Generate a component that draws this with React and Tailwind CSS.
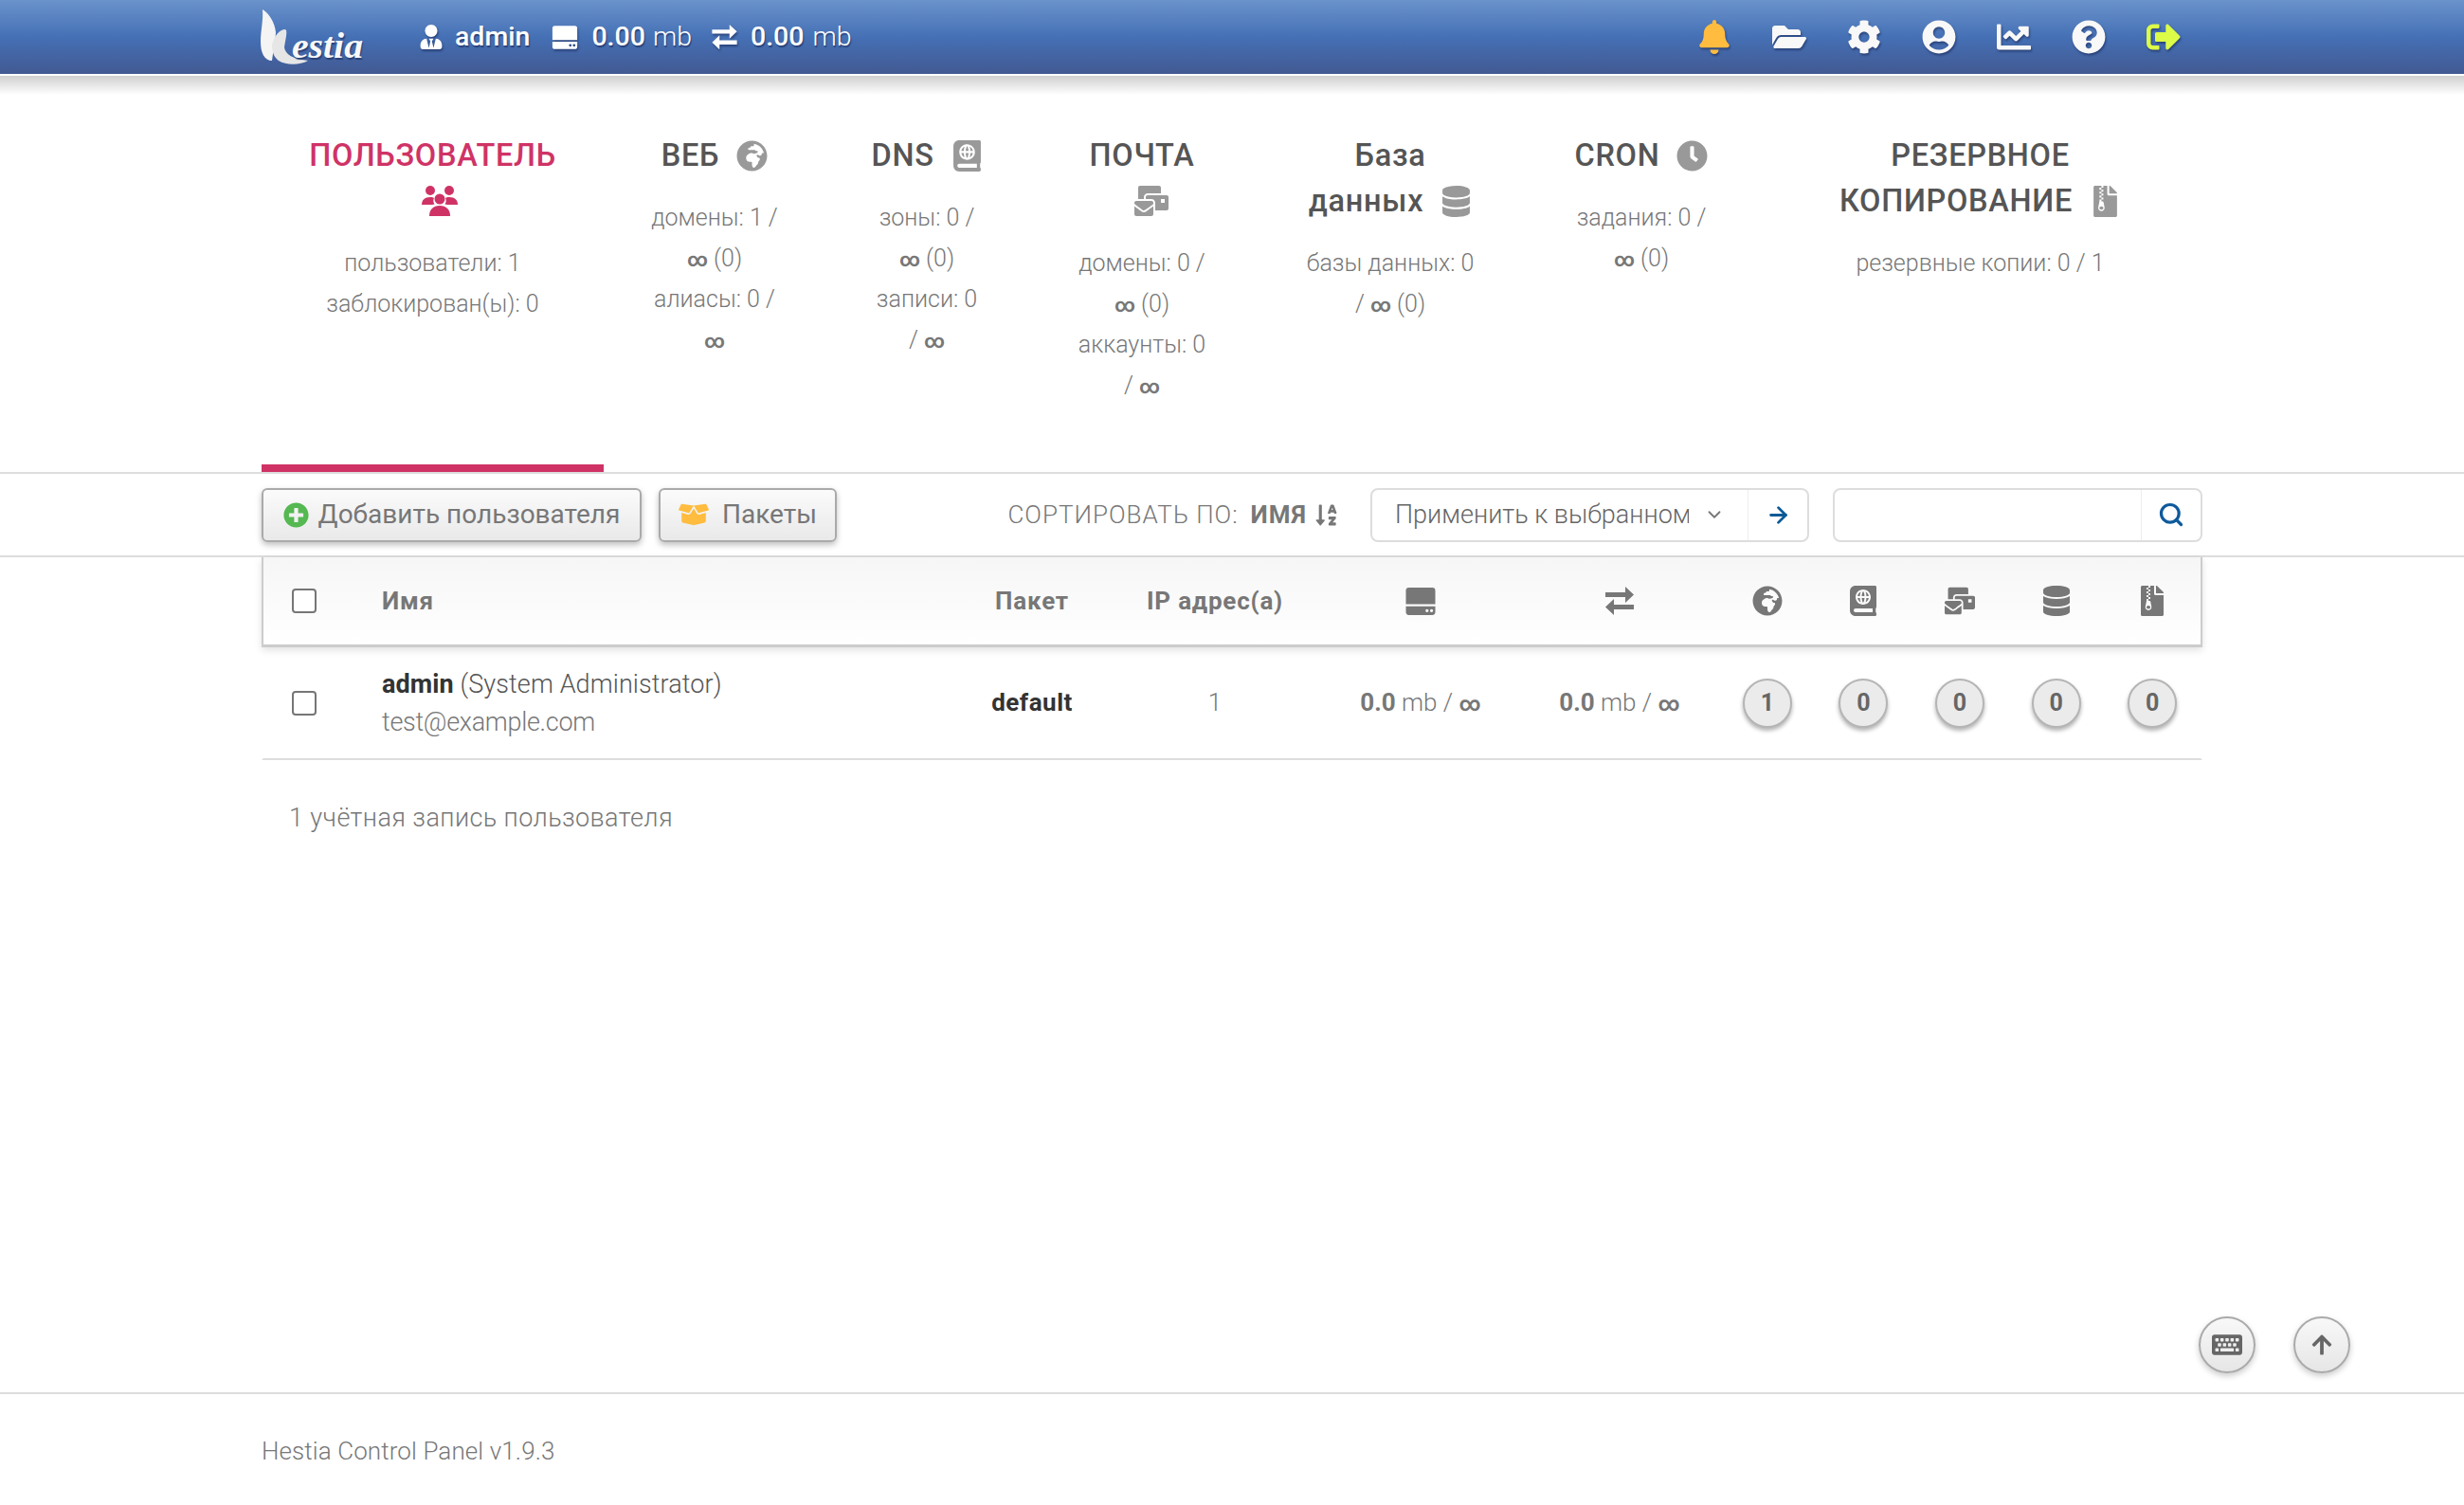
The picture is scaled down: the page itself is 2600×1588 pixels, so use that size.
import {
  FaUserTie, FaBell, FaFolderOpen, FaCog, FaUserCircle, FaChartLine,
  FaQuestionCircle, FaSignOutAlt, FaGlobeAfrica, FaAtlas, FaMailBulk, FaDatabase,
  FaClock, FaFileArchive, FaPlusCircle, FaBoxOpen, FaSortAlphaDown,
  FaKeyboard, FaArrowUp,
} from 'react-icons/fa';
import { ArrowRight, ChevronDown, Search } from 'lucide-react';

const headerShadow = 'drop-shadow-[1px_2px_1px_rgba(30,50,100,0.7)]';

function HddIcon({ className }) {
  return (
    <svg viewBox="0 0 32 30" fill="currentColor" fillRule="evenodd" className={className}>
      <path d="M4 1h24a3 3 0 0 1 3 3v14H1V4a3 3 0 0 1 3-3z" />
      <path d="M1 20h30v6a3 3 0 0 1-3 3H4a3 3 0 0 1-3-3zM21 24.5a1.6 1.6 0 1 0 3.2 0a1.6 1.6 0 1 0-3.2 0zM25.6 24.5a1.6 1.6 0 1 0 3.2 0a1.6 1.6 0 1 0-3.2 0z" />
    </svg>
  );
}

function ExchangeIcon({ className }) {
  return (
    <svg viewBox="0 0 32 32" fill="currentColor" className={className}>
      <path d="M1 7h21V1l9 8.500-9 8.500v-6H1z" />
      <path d="M31 20H10v-6l-9 8.500 9 8.500v-6h21z" />
    </svg>
  );
}

function UsersIcon({ className }) {
  return (
    <svg viewBox="0 0 40 32" fill="currentColor" className={className}>
      <circle cx="10" cy="5" r="5" />
      <circle cx="30" cy="5" r="5" />
      <path d="M1 20c0-5 3-8 9-8 2 0 3 .4 4 1-1 2-1 4 .5 6.500L12 20z" />
      <path d="M39 20c0-5-3-8-9-8-2 0-3 .4-4 1 1 2 1 4-.5 6.500L28 20z" />
      <circle cx="20" cy="14" r="5.500" />
      <path d="M9 32c0-7 4-11 11-11s11 4 11 11z" />
    </svg>
  );
}

const topIcons = [
  { icon: FaBell, color: 'text-[#ffbc3f]' },
  { icon: FaFolderOpen, color: 'text-[#f8f8f8]' },
  { icon: FaCog, color: 'text-[#f8f8f8]' },
  { icon: FaUserCircle, color: 'text-[#f8f8f8]' },
  { icon: FaChartLine, color: 'text-[#f8f8f8]' },
  { icon: FaQuestionCircle, color: 'text-[#f8f8f8]' },
  { icon: FaSignOutAlt, color: 'text-[#dcfc48]' },
];

const tabs = [
  { width: 'w-[361px]', title: ['ПОЛЬЗОВАТЕЛЬ'], icon: UsersIcon, iconClass: 'w-[40px] h-[32px] ml-[14px]', iconBelow: true, active: true, stats: ['пользователи: 1', 'заблокирован(ы): 0'] },
  { width: 'w-[234px]', title: ['ВЕБ'], icon: FaGlobeAfrica, iconClass: 'text-[33px]', stats: ['домены: 1 /', '∞ (0)', 'алиасы: 0 /', '∞'] },
  { width: 'w-[214px]', title: ['DNS'], icon: FaAtlas, iconClass: 'text-[33px]', stats: ['зоны: 0 /', '∞ (0)', 'записи: 0', '/ ∞'] },
  { width: 'w-[240px]', title: ['ПОЧТА'], icon: FaMailBulk, iconClass: 'text-[36px] ml-[19px]', iconBelow: true, stats: ['домены: 0 /', '∞ (0)', 'аккаунты: 0', '/ ∞'] },
  { width: 'w-[284px]', title: ['База', 'данных'], icon: FaDatabase, iconClass: 'text-[33px]', stats: ['базы данных: 0', '/ ∞ (0)'] },
  { width: 'w-[246px]', title: ['CRON'], icon: FaClock, iconClass: 'text-[33px]', stats: ['задания: 0 /', '∞ (0)'] },
  { width: 'w-[469px]', title: ['РЕЗЕРВНОЕ', 'КОПИРОВАНИЕ'], icon: FaFileArchive, iconClass: 'text-[33px]', stats: ['резервные копии: 0 / 1'] },
];

const tableIcons = [FaGlobeAfrica, FaAtlas, FaMailBulk, FaDatabase, FaFileArchive];
const counters = ['1', '0', '0', '0', '0'];

const rowGrid = 'grid grid-cols-[88px_642px_162px_224px_210px_210px_repeat(5,101.6px)] items-center border-x-2';

// the infinity sign is much heavier than the text around it
function WithInfinity({ text }) {
  const parts = text.split('∞');
  return (
    <>
      {parts[0]}
      {parts.length > 1 && <span className="font-bold text-[21px] leading-none">∞</span>}
      {parts[1]}
    </>
  );
}

function Logo() {
  return (
    <svg viewBox="0 0 120 70" className="w-[120px] h-[70px] -ml-[6px]">
      <path fill="#f4f4f4" d="M7 6C14 10 20 20 21 30C21 40 18 50 17 60C9 60 5 52 5 40C5 28 8 18 7 6Z" />
      <path fill="#e6e6e6" d="M17 44C19 34 25 27 31 27C34 28 31 38 30 46C31 53 38 58 55 60C46 65 32 65 24 60C20 57 17 52 17 44Z" />
      <text x="38" y="57" fontFamily="'Liberation Serif', serif" fontStyle="italic" fontWeight="700" fontSize="38" fill="#f8f8f8" textLength="75" lengthAdjust="spacingAndGlyphs">
        estia
      </text>
    </svg>
  );
}

function Header() {
  return (
    <header className="h-[78px] bg-[linear-gradient(to_bottom,#6a93cb_0%,#4570b5_50%,#425992_100%)]">
      <div className="w-[2048px] mx-auto h-full flex items-center justify-between text-white">
        <div className="flex items-center text-[28.5px] [text-shadow:1px_2px_1px_rgba(30,50,100,0.7)]">
          <Logo />
          <FaUserTie className={`ml-[52px] text-[26px] ${headerShadow}`} />
          <span className="ml-[12px] font-medium">admin</span>
          <HddIcon className={`ml-[23px] w-[28px] h-[27px] ${headerShadow}`} />
          <span className="ml-[14px] font-medium">0.00</span>
          <span className="ml-[8px] font-light">mb</span>
          <ExchangeIcon className={`ml-[20px] w-[29px] h-[28px] ${headerShadow}`} />
          <span className="ml-[13px] font-medium">0.00</span>
          <span className="ml-[9px] font-light">mb</span>
        </div>
        <div className="flex items-center mr-[2px]">
          {topIcons.map((item, index) => {
            const Icon = item.icon;
            return (
              <div key={index} className="w-[79px] flex justify-center">
                <Icon className={`text-[36px] ${item.color} ${headerShadow}`} />
              </div>
            );
          })}
        </div>
      </div>
    </header>
  );
}

function Tab({ tab }) {
  const Icon = tab.icon;
  const tone = tab.active ? 'text-[#cf3366]' : 'text-[#999]';
  return (
    <div className={`${tab.width} pt-[62px] pb-[62px] border-b-8 text-center ${tab.active ? 'border-[#cf3366]' : 'border-transparent'}`}>
      <div className={`text-[32.5px] tracking-[0.7px] leading-[48px] font-medium ${tab.active ? 'text-[#cf3366]' : 'text-[#555]'}`}>
        {tab.title.map((line, index) => (
          <div key={index} className="flex items-center justify-center">
            {line}
            {!tab.iconBelow && index === tab.title.length - 1 && <Icon className={`ml-[18px] ${tab.iconClass} ${tone}`} />}
          </div>
        ))}
        {tab.iconBelow && (
          <div className="h-[48px] flex items-center justify-center">
            <Icon className={`${tab.iconClass} ${tone}`} />
          </div>
        )}
      </div>
      <div className="mt-[20px] text-[25px] leading-[43px] font-light text-[#777]">
        {tab.stats.map((line, index) => (
          <div key={index}><WithInfinity text={line} /></div>
        ))}
      </div>
    </div>
  );
}

function Toolbar() {
  return (
    <div className="border-b-2 border-[#ddd]">
      <div className="w-[2048px] mx-auto h-[86px] flex items-center justify-between">
        <div className="flex items-center gap-[18px]">
          <button className="w-[401px] h-[57px] flex items-center justify-center gap-[10px] rounded-[6px] border-2 border-[#aaa] bg-[linear-gradient(to_bottom,#fbfbfb,#e9e9e9)] shadow-[0_3px_6px_rgba(0,0,0,0.25)] text-[28px] text-[#777]">
            <FaPlusCircle className="text-[27px] text-[#55b851]" />
            Добавить пользователя
          </button>
          <button className="w-[188px] h-[57px] flex items-center justify-center gap-[14px] rounded-[6px] border-2 border-[#aaa] bg-[linear-gradient(to_bottom,#fbfbfb,#e9e9e9)] shadow-[0_3px_6px_rgba(0,0,0,0.25)] text-[28px] text-[#777]">
            <FaBoxOpen className="text-[32px] text-[#ffbc3f]" />
            Пакеты
          </button>
        </div>
        <div className="flex items-center">
          <span className="text-[26px] tracking-[1px] font-light text-[#777]">СОРТИРОВАТЬ ПО:</span>
          <span className="ml-[13px] text-[26px] tracking-[1px] font-bold text-[#777]">ИМЯ</span>
          <FaSortAlphaDown className="ml-[8px] text-[25px] text-[#777]" />
          <div className="ml-[34px] w-[463px] h-[57px] flex items-center rounded-[8px] border-2 border-[#ddd]">
            <div className="flex-1 min-w-0 h-full flex items-center pl-[24px] border-r border-[#eee]">
              <span className="w-[310px] overflow-hidden whitespace-nowrap text-[27px] font-light text-[#666]">Применить к выбранном</span>
              <ChevronDown className="ml-[16px] w-[22px] h-[22px] text-[#777]" />
            </div>
            <div className="w-[62px] flex justify-center">
              <ArrowRight strokeWidth={2.5} className="w-[27px] h-[27px] text-[#0b5a96]" />
            </div>
          </div>
          <div className="ml-[25px] w-[390px] h-[57px] flex items-center rounded-[8px] border-2 border-[#ddd]">
            <input type="text" className="flex-1 min-w-0 h-full outline-none border-r border-[#eee]" />
            <div className="w-[62px] flex justify-center">
              <Search strokeWidth={2.75} className="w-[28px] h-[28px] text-[#0e5a9c]" />
            </div>
          </div>
        </div>
      </div>
    </div>
  );
}

function Checkbox() {
  return (
    <input type="checkbox" className="appearance-none block w-[26px] h-[26px] ml-[30px] rounded-[4px] border-2 border-[#767676] bg-white" />
  );
}

function UserTable() {
  return (
    <div className="w-[2048px] mx-auto">
      <div className={`${rowGrid} h-[95px] border-[#ccc] border-b-[3px] border-b-[#ccc] bg-[linear-gradient(to_bottom,#f6f6f6,#ffffff)] shadow-[0_3px_8px_rgba(0,0,0,0.12)] text-[26px] tracking-[0.8px] font-bold text-[#777]`}>
        <Checkbox />
        <div className="pl-[37px]">Имя</div>
        <div className="text-center">Пакет</div>
        <div className="text-center">IP адрес(а)</div>
        <div className="flex justify-center"><HddIcon className="w-[34px] h-[31px] text-[#777]" /></div>
        <div className="flex justify-center"><ExchangeIcon className="w-[34px] h-[32px] text-[#777]" /></div>
        {tableIcons.map((Icon, index) => (
          <div key={index} className="flex justify-center"><Icon className="text-[32px] text-[#777]" /></div>
        ))}
      </div>
      <div className={`${rowGrid} h-[119px] border-x-transparent border-b-2 border-b-[#ddd] text-[26px] font-light text-[#777]`}>
        <Checkbox />
        <div className="pl-[37px] pt-[1px]">
          <div className="leading-[40px] text-[27px] tracking-[0.1px] text-[#555]"><span className="font-bold text-[#333]">admin</span> (System Administrator)</div>
          <div className="leading-[40px] text-[27px] tracking-[-0.3px] text-[#777]">test@example.com</div>
        </div>
        <div className="text-center font-bold tracking-[0.5px] text-[#333]">default</div>
        <div className="text-center">1</div>
        <div className="text-center"><span className="font-bold">0.0</span> mb / <span className="font-bold text-[22px] leading-none">∞</span></div>
        <div className="text-center"><span className="font-bold">0.0</span> mb / <span className="font-bold text-[22px] leading-none">∞</span></div>
        {counters.map((value, index) => (
          <div key={index} className="flex justify-center">
            <div className="w-[52px] h-[52px] flex items-center justify-center rounded-full border-2 border-[#b5b5b5] bg-[#ebebeb] shadow-[0_3px_4px_rgba(0,0,0,0.3)] text-[25px] font-bold text-[#666]">
              {value}
            </div>
          </div>
        ))}
      </div>
      <div className="pl-[29px] pt-[41px] text-[27px] tracking-[0.4px] font-light leading-[40px] text-[#777]">1 учётная запись пользователя</div>
    </div>
  );
}

function FloatButton({ icon: Icon, size }) {
  return (
    <button className="w-[60px] h-[60px] flex items-center justify-center rounded-full border-2 border-[#aaa] bg-[linear-gradient(to_bottom,#f8f8f8,#e6e6e6)] shadow-[0_3px_6px_rgba(0,0,0,0.2)]">
      <Icon className={`${size} text-[#666]`} />
    </button>
  );
}

export default function App() {
  return (
    <div className="relative w-[2600px] h-[1588px] flex flex-col bg-white font-['Roboto',sans-serif]">
      <Header />
      <div className="h-[20px] mt-[2px] -mb-[22px] bg-[linear-gradient(to_bottom,#cfcfcf,#ffffff)]" />

      <div className="border-b-2 border-[#ddd]">
        <div className="w-[2048px] mx-auto flex items-stretch">
          {tabs.map((tab, index) => (
            <Tab key={index} tab={tab} />
          ))}
        </div>
      </div>

      <Toolbar />
      <UserTable />

      <footer className="mt-auto h-[119px] border-t-2 border-[#ddd]">
        <div className="w-[2048px] mx-auto pt-[40px] text-[26px] tracking-[0.1px] font-light leading-[40px] text-[#777]">Hestia Control Panel v1.9.3</div>
      </footer>

      {/* floating shortcuts */}
      <div className="absolute left-[2320px] top-[1389px] flex gap-[40px]">
        <FloatButton icon={FaKeyboard} size="text-[32px]" />
        <FloatButton icon={FaArrowUp} size="text-[24px]" />
      </div>
    </div>
  );
}
